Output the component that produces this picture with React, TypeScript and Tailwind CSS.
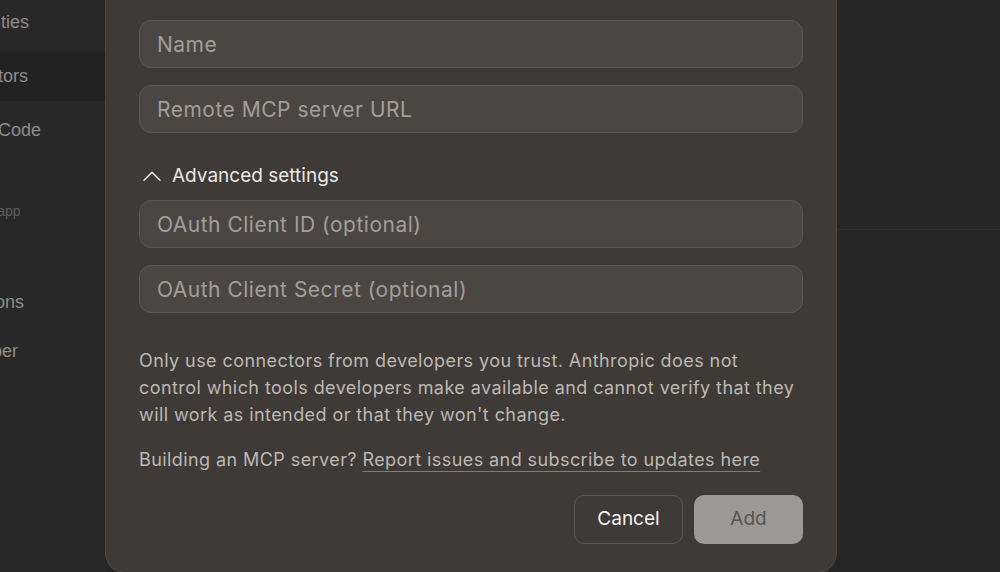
import React from "react";

const sans = { fontFamily: '"Inter", "Noto Sans", sans-serif' };
const side = { fontFamily: '"Liberation Sans", Arial, sans-serif' };

function Field({ placeholder }: { placeholder: string }) {
  return (
    <input
      placeholder={placeholder}
      className="h-[48px] w-full rounded-[12px] border border-[#5b5754] bg-[#4a4644] px-[17px] pt-[1px] text-[21px] tracking-[0.5px] text-[#ece9e4] outline-none placeholder:text-[#a29e99]"
      style={sans}
    />
  );
}

function NavItem({ label, active }: { label: string; active?: boolean }) {
  return (
    <div
      className={`flex h-[49px] items-center whitespace-nowrap text-[18px] text-[#8d8d8d] ${
        active ? "bg-[#222222]" : ""
      }`}
    >
      <span className="ml-[-64px]">{label}</span>
    </div>
  );
}

export default function App() {
  return (
    <div className="relative h-[572px] w-[1000px] overflow-hidden bg-[#262626]">
      {/* page behind the dialog */}
      <div className="flex h-full">
        <aside className="w-[105px] shrink-0 overflow-hidden bg-[#282828]" style={side}>
          <div className="mt-[-2px] flex flex-col gap-[5px]">
            <NavItem label="Capabilities" />
            <NavItem label="Connectors" active />
            <NavItem label="Claude Code" />
          </div>
          <div className="mt-[44px] whitespace-nowrap text-[14px] leading-[24px] text-[#5e5e5e]">
            <span className="ml-[-58px]">Desktop app</span>
          </div>
          <div className="mt-[6px] flex flex-col">
            <NavItem label="Usage" />
            <NavItem label="Extensions" />
            <NavItem label="Developer" />
          </div>
        </aside>
        <main className="flex-1">
          <div className="h-[229px]" />
          <div className="h-px bg-[#2f2f2f]" />
        </main>
      </div>

      {/* dialog */}
      <div
        className="absolute left-[105px] top-0 w-[732px] rounded-b-[20px] border-x border-b border-[#4b4745] bg-[#3d3a38] px-[33px] pb-[28px] pt-[20px]"
        style={sans}
      >
        <div className="flex flex-col gap-[17px]">
          <Field placeholder="Name" />
          <Field placeholder="Remote MCP server URL" />
        </div>

        <button className="mt-[31px] flex h-[24px] items-center gap-[11px] pl-[4px] text-[19px] text-[#ebe8e3]">
          <svg width="18" height="10" viewBox="0 0 18 10" fill="none">
            <path d="M1 9.2 L9 1.2 L17 9.2" stroke="#ebe8e3" strokeWidth="1.5" strokeLinecap="round" strokeLinejoin="round" />
          </svg>
          <span>Advanced settings</span>
        </button>

        <div className="mt-[12px] flex flex-col gap-[17px]">
          <Field placeholder="OAuth Client ID (optional)" />
          <Field placeholder="OAuth Client Secret (optional)" />
        </div>

        <p className="mt-[34px] text-[18px] leading-[27px] tracking-[0.42px] text-[#bdb8b1]">
          Only use connectors from developers you trust. Anthropic does not control which tools developers make
          available and cannot verify that they will work as intended or that they won't change.
        </p>
        <p className="mt-[18px] text-[18px] leading-[27px] tracking-[0.42px] text-[#bdb8b1]">
          Building an MCP server?{" "}
          <a className="underline decoration-[#827d78] underline-offset-[5px]">
            Report issues and subscribe to updates here
          </a>
        </p>

        <div className="mt-[22px] flex justify-end gap-[11px]">
          <button className="h-[49px] w-[109px] rounded-[10px] border border-[#5b5754] text-[19px] text-[#f4f2ee]">
            Cancel
          </button>
          <button className="h-[49px] w-[109px] rounded-[10px] bg-[#9b9997] text-[19px] text-[#575451]">
            Add
          </button>
        </div>
      </div>
    </div>
  );
}
